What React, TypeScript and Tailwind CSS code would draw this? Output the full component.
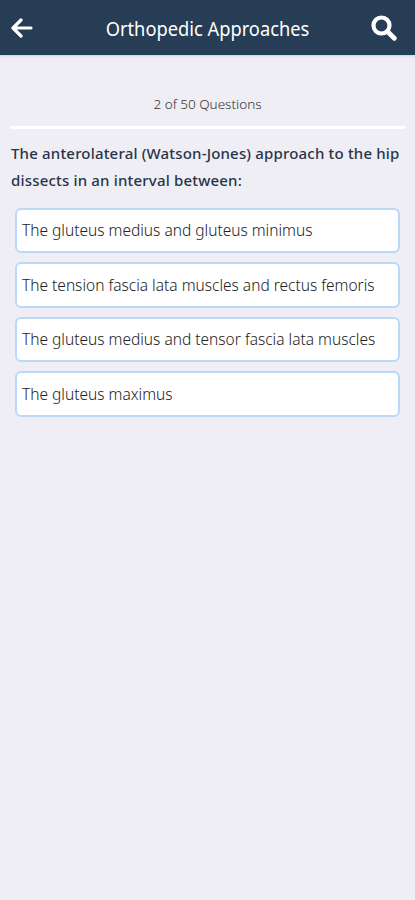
import React from "react";

const answers = [
  "The gluteus medius and gluteus minimus",
  "The tension fascia lata muscles and rectus femoris",
  "The gluteus medius and tensor fascia lata muscles",
  "The gluteus maximus",
];

const BackIcon: React.FC = () => (
  <svg
    viewBox="0 0 22 20"
    className="h-5 w-[22px]"
    fill="none"
    stroke="currentColor"
    strokeWidth="3.2"
    strokeLinecap="round"
    strokeLinejoin="round"
  >
    <path d="M20 10H3M10 2L2 10l8 8" />
  </svg>
);

const SearchIcon: React.FC = () => (
  <svg viewBox="0 0 26 26" className="h-[26px] w-[26px]" fill="none" stroke="currentColor">
    <circle cx="10.5" cy="10.5" r="8" strokeWidth="4.2" />
    <path d="M16.5 16.5l6.8 6.8" strokeWidth="4.8" strokeLinecap="round" />
  </svg>
);

const Header: React.FC = () => (
  <header className="flex h-[55px] items-center border-b border-[#1c4258] bg-[#263d55] pt-px pr-[10px] pl-[11px] text-white shadow-sm">
    <button aria-label="Back" className="flex w-[33px]">
      <BackIcon />
    </button>
    <h1 className="flex-1 scale-x-[0.914] pt-[3px] text-center text-[20px] whitespace-nowrap">
      Orthopedic Approaches
    </h1>
    <button aria-label="Search" className="flex w-[34px]">
      <SearchIcon />
    </button>
  </header>
);

export default function App() {
  return (
    <div className="min-h-screen bg-[#eeeef4] font-['Noto_Sans',sans-serif]">
      <Header />
      <main className="px-[10px]">
        <p className="flex h-[74px] items-center justify-center border-b-[3px] border-white pt-[27px] text-[13.5px] font-light text-[#333]">
          2 of 50 Questions
        </p>
        <h2 className="-mr-1 pt-[11px] pl-px text-[15px] leading-[27px] font-medium tracking-[0.18px] text-[#28344a]">
          The anterolateral (Watson-Jones) approach to the hip dissects in an interval between:
        </h2>
        <ul className="mt-[13.5px] flex flex-col gap-[9px] px-[5px]">
          {answers.map((answer) => (
            <li
              key={answer}
              className="flex h-[45.5px] items-center rounded-[6px] border-2 border-[#bcd8f7] bg-white px-[5px] pt-px text-[15.5px] font-light whitespace-nowrap text-[#222]"
            >
              {answer}
            </li>
          ))}
        </ul>
      </main>
    </div>
  );
}
